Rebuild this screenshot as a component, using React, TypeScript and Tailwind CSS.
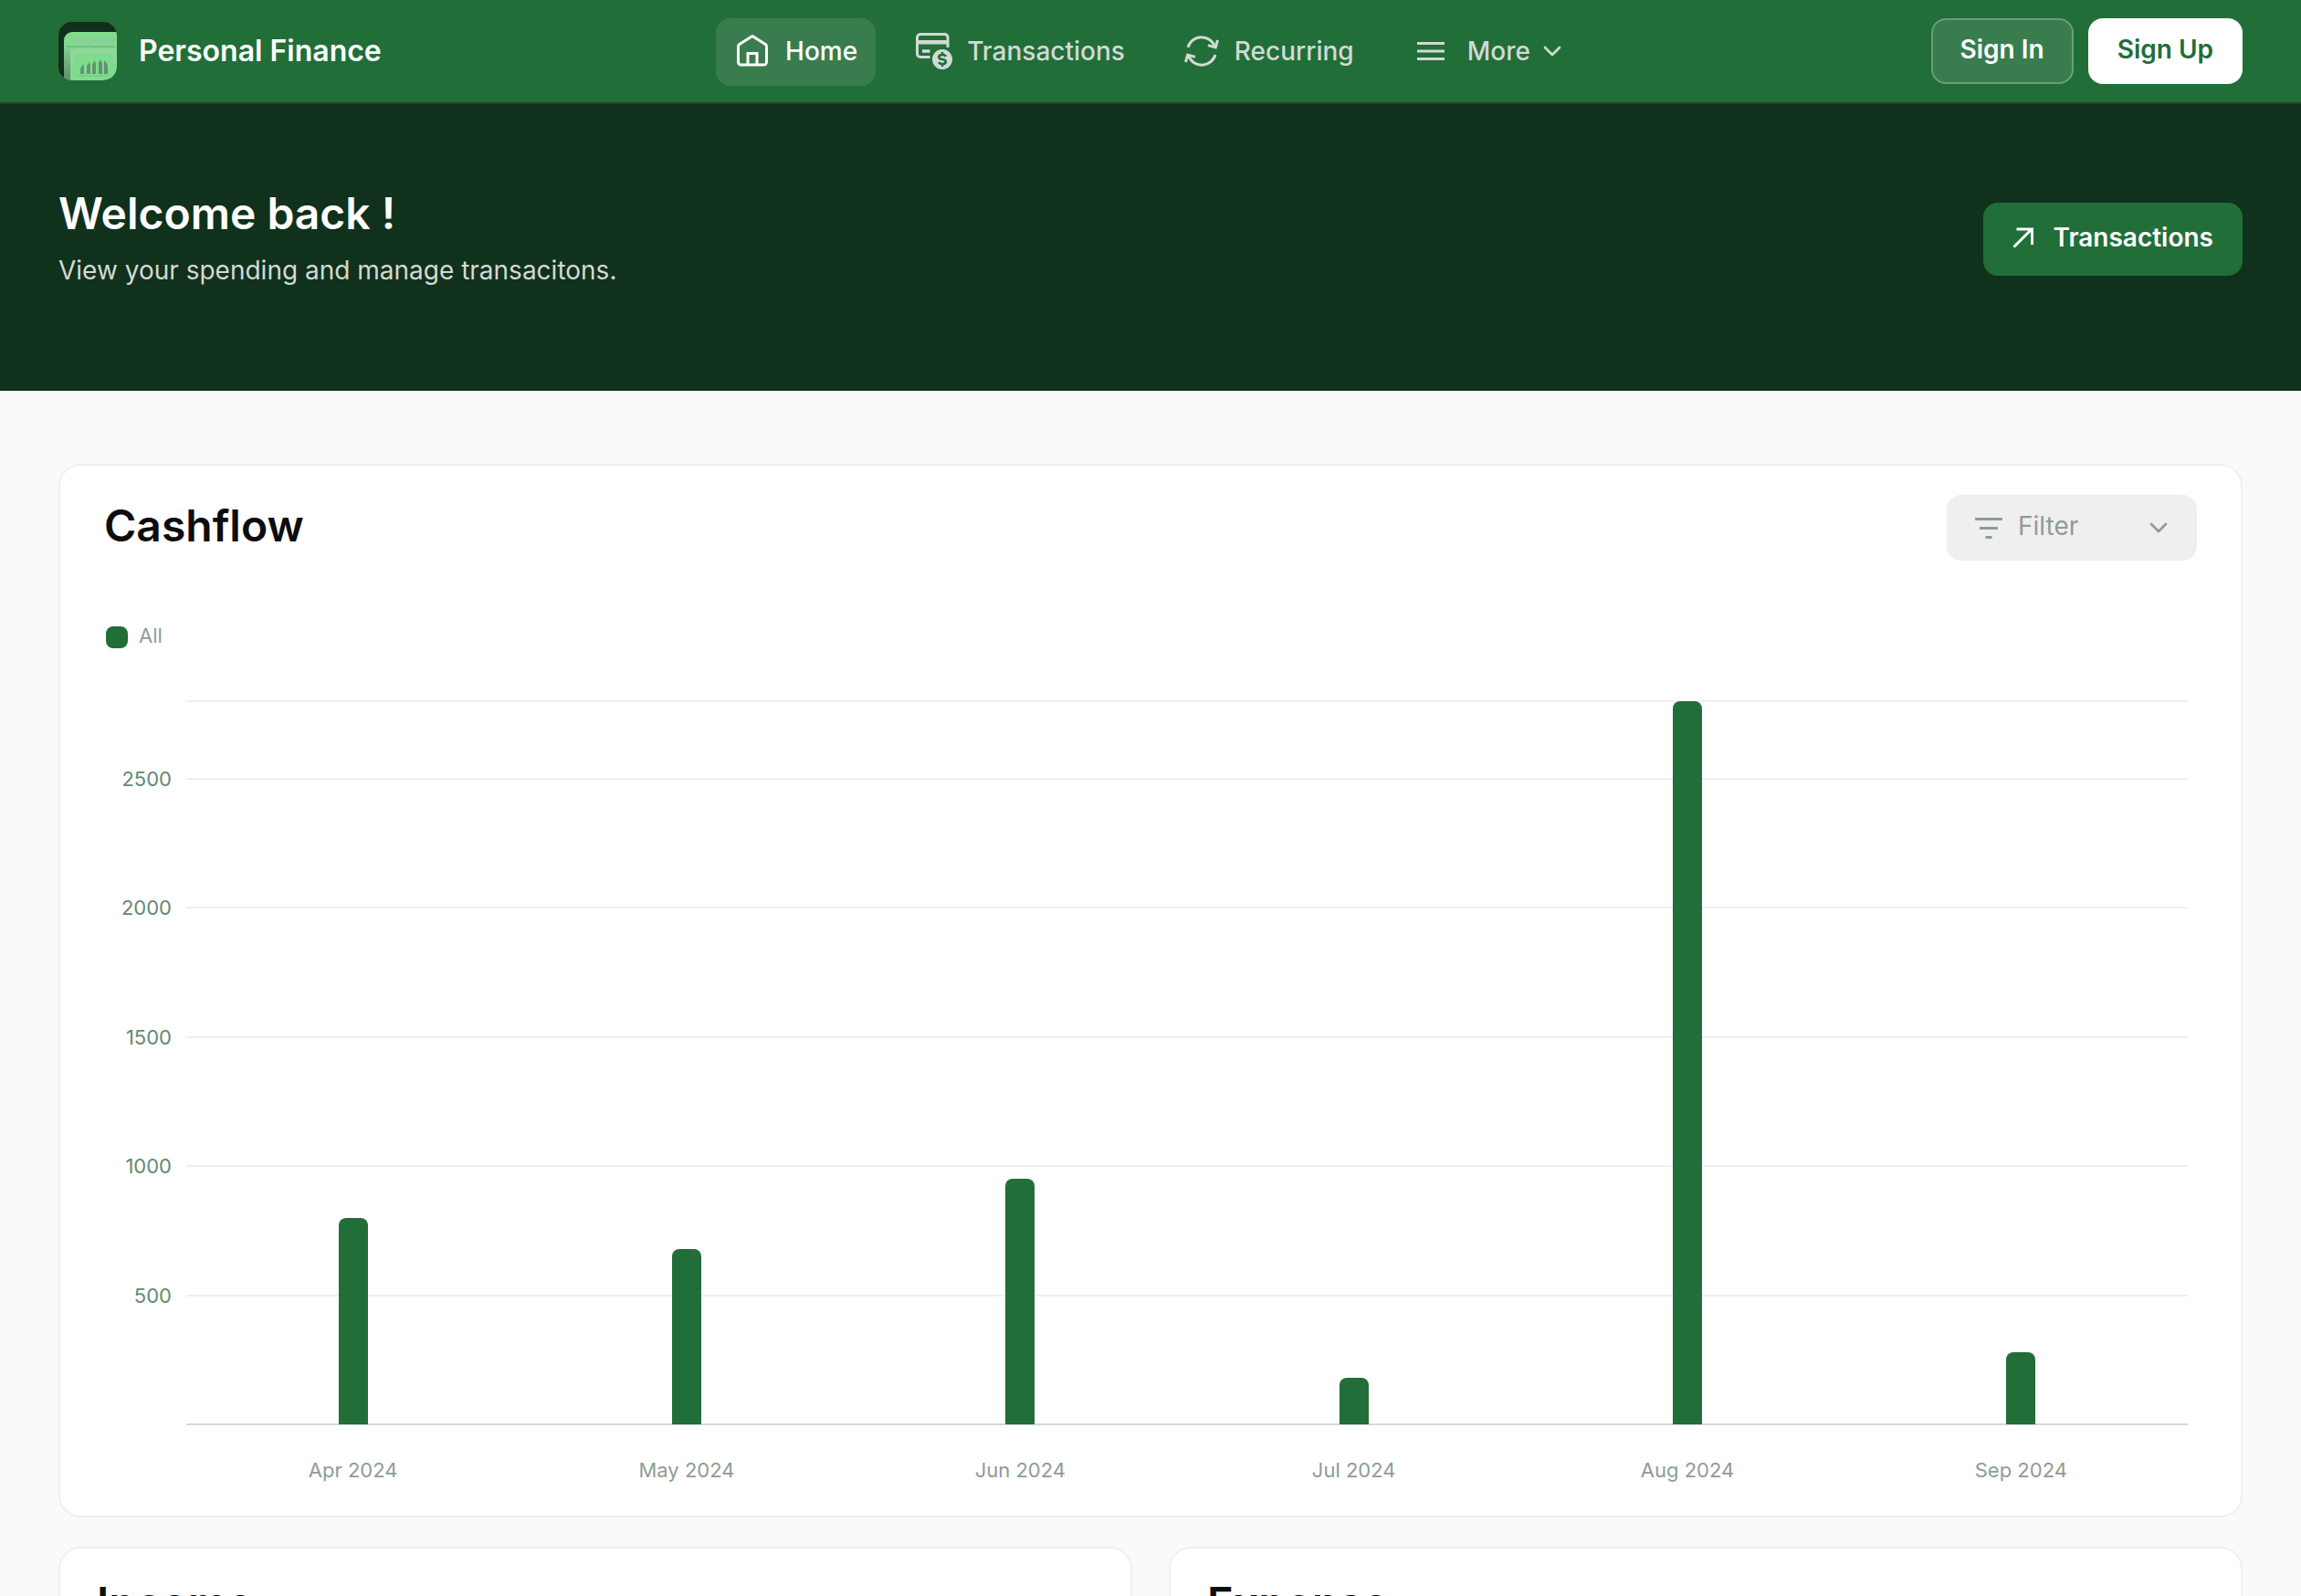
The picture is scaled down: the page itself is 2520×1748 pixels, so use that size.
import type { ReactNode } from 'react'
import { ChevronDown } from 'lucide-react'

const cashflow = [
    { month: 'Apr 2024', value: 800 },
    { month: 'May 2024', value: 680 },
    { month: 'Jun 2024', value: 950 },
    { month: 'Jul 2024', value: 180 },
    { month: 'Aug 2024', value: 2800 },
    { month: 'Sep 2024', value: 280 },
]

const MAX = 2800
const ticks = [500, 1000, 1500, 2000, 2500, MAX]

const Logo = () => (
    <svg viewBox="0 0 64 64" className="size-16" aria-hidden="true">
        <defs>
            <clipPath id="logo-clip">
                <rect width="64" height="64" rx="15" />
            </clipPath>
            <linearGradient id="logo-side" x1="0" y1="0" x2="0" y2="1">
                <stop offset="0" stopColor="#7fdc8d" />
                <stop offset="0.9" stopColor="#679372" />
            </linearGradient>
        </defs>
        <g clipPath="url(#logo-clip)">
            <rect width="64" height="64" fill="#10301b" />
            <path d="M6 64V20a9 9 0 0 1 9-9h49v53z" fill="#7fdc8d" />
            <path d="M6 64V22h7v42z" fill="url(#logo-side)" />
            <path d="M14 20h16l4 4 4-4h24" fill="none" stroke="#8fcb99" strokeWidth="4" />
            <path d="M9 27h53" stroke="#74bd82" strokeWidth="2" />
            <path d="M15 45V38q0-6 6-6h36q5 0 5 6v6" fill="none" stroke="#98d3a1" strokeWidth="4" />
            <path d="M24 57v-6l3-5 1 4v7zM31 57V48l3-4 1 4v9zM37 57V47l3-5 1 4v11zM44 57V45l2-4 2 4v12zM50 57V42l3 3 1 4v8z" fill="#639370" />
            <path d="M22 59h34" stroke="#74c482" />
        </g>
    </svg>
)

const HomeIcon = () => (
    <svg viewBox="0 0 40 40" className="size-10" fill="none" stroke="currentColor" strokeWidth="3" aria-hidden="true">
        <path d="M20 3.5 5.8 12.6Q4.5 13.5 4.5 15V32a3 3 0 0 0 3 3h25a3 3 0 0 0 3-3V15q0-1.5-1.3-2.4z" strokeLinejoin="round" />
        <path d="M15 35V22.5h10V35" />
    </svg>
)

const TransactionsIcon = () => (
    <svg viewBox="0 0 40 40" className="size-10" fill="none" stroke="currentColor" strokeWidth="3" aria-hidden="true">
        <path d="M35 16V5a3.5 3.5 0 0 0-3.5-3.5H5A3.5 3.5 0 0 0 1.5 5v18A3.5 3.5 0 0 0 5 26.5h10.5" />
        <path d="M1.5 10.2h34" strokeWidth="4.5" />
        <path d="M7 20h8.5" strokeWidth="3.5" />
        <circle cx="29" cy="29" r="11" fill="currentColor" stroke="none" />
        <path d="M33 25.8q-1.2-1.8-4-1.8c-5 0-5 4.6 0 5 5 .4 5 5 0 5q-2.8 0-4-1.8M29 21v3M29 34v3" stroke="#216e39" strokeWidth="2.6" />
    </svg>
)

const RecurringIcon = () => (
    <svg viewBox="0 0 40 40" className="size-10" fill="none" stroke="currentColor" strokeWidth="3" aria-hidden="true">
        <path d="M5 15.8A15.5 15.5 0 0 1 34.5 15.2M37.5 8l-2.2 8-8.3-2.4" />
        <path d="M35 24A15.5 15.5 0 0 1 5.5 24.8M2.5 32l2.2-8 8.3 2.4" />
    </svg>
)

const MenuIcon = () => (
    <svg viewBox="0 0 40 40" className="size-10" stroke="currentColor" strokeWidth="3" aria-hidden="true">
        <path d="M5 11.5h30M5 20h30M5 28.5h30" />
    </svg>
)

const ArrowIcon = () => (
    <svg viewBox="0 0 32 32" className="size-8" fill="none" stroke="currentColor" strokeWidth="3" aria-hidden="true">
        <path d="M1.5 26.5 21 7M4.5 7h17v17" />
    </svg>
)

const FilterIcon = () => (
    <svg viewBox="0 0 40 40" className="size-10" stroke="currentColor" strokeWidth="3" aria-hidden="true">
        <path d="M5 10.5h30M10 20.5h20M16.5 30.5h7" />
    </svg>
)

const NavLink = ({ icon, label, active = false }: { icon: ReactNode; label: string; active?: boolean }) => (
    <a
        href="#"
        className={`flex h-[74px] items-center gap-4 rounded-2xl px-5 pb-0.5 ${
            active ? 'bg-white/11 text-white' : 'text-[#d3d9d5] hover:text-white'
        }`}
    >
        {icon}
        {label}
    </a>
)

const Header = () => (
    <header className="grid grid-cols-[1fr_auto_1fr] items-start border-b-2 border-[#1a4528] bg-[#216e39] px-16">
        <a href="#" className="flex h-28 items-center gap-6 text-[32px] font-semibold text-white">
            <Logo />
            Personal Finance
        </a>
        <nav className="flex gap-6 pt-5 text-[28px] font-medium">
            <NavLink icon={<HomeIcon />} label="Home" active />
            <NavLink icon={<TransactionsIcon />} label="Transactions" />
            <NavLink icon={<RecurringIcon />} label="Recurring" />
            <button type="button" className="flex h-[74px] items-center gap-5 px-5 pb-0.5 text-[#d3d9d5]">
                <MenuIcon />
                <span className="flex items-center gap-2">
                    More
                    <ChevronDown className="size-8" />
                </span>
            </button>
        </nav>
        <div className="flex justify-end gap-4 pt-5 text-[28px] font-semibold">
            <button type="button" className="h-18 rounded-2xl border-2 border-white/25 bg-white/11 px-[30px] pb-1 text-white">
                Sign In
            </button>
            <button type="button" className="h-18 rounded-2xl bg-white px-8 pb-1 text-[#216e39]">
                Sign Up
            </button>
        </div>
    </header>
)

const Hero = () => (
    <section className="flex items-center justify-between bg-[#10311b] px-16 pt-[90px] pb-[108px]">
        <div>
            <h1 className="text-[48px] leading-[60px] font-semibold text-white">Welcome back !</h1>
            <p className="mt-2 text-[28px] leading-[48px] text-[#d3d9d5]">View your spending and manage transacitons.</p>
        </div>
        <a href="#" className="flex h-20 items-center gap-3 rounded-2xl bg-[#216e39] px-8 pb-1 text-[28px] font-semibold text-white">
            <ArrowIcon />
            Transactions
        </a>
    </section>
)

const CashflowChart = () => (
    <div>
        <div className="mt-[72px] flex h-6 items-center gap-3 pl-0.5">
            <span className="size-6 rounded-lg bg-[#216e39]" />
            <span className="pb-1 text-[22px] text-[#8e9d93]">All</span>
        </div>

        <div className="mt-[58px] mr-2.5 ml-[90px]">
            <div className="relative h-[792px]">
                {ticks.map((tick) => (
                    <div
                        key={tick}
                        className="absolute inset-x-0 h-0.5 translate-y-1/2 bg-[#efefef]"
                        style={{ bottom: `${(tick / MAX) * 100}%` }}
                    >
                        {tick < MAX && (
                            <span className="absolute top-1/2 right-full -translate-y-1/2 pr-4 text-[22px] text-[#648a6f]">{tick}</span>
                        )}
                    </div>
                ))}
                <div className="absolute inset-x-0 bottom-0 h-0.5 translate-y-1/2 bg-[#d3d9d5]" />
                <div className="relative grid h-full grid-cols-6 items-end justify-items-center">
                    {cashflow.map((item) => (
                        <div
                            key={item.month}
                            className="w-8 rounded-t-lg bg-[#216e39]"
                            style={{ height: `${(item.value / MAX) * 100}%` }}
                        />
                    ))}
                </div>
            </div>
            <div className="mt-8 grid h-9 grid-cols-6 items-center text-center text-[22px] text-[#8e9d93]">
                {cashflow.map((item) => (
                    <span key={item.month}>{item.month}</span>
                ))}
            </div>
        </div>
    </div>
)

const App = () => {
    return (
        <div className="h-screen overflow-hidden bg-[#fafafa] font-['Inter',sans-serif] text-[#0d0d0d]">
            <Header />
            <Hero />
            <main className="px-16 pt-20">
                <section className="rounded-3xl border-2 border-[#f0f0f0] bg-white px-12 py-8">
                    <div className="flex items-center justify-between">
                        <h2 className="pb-1 text-[48px] leading-[60px] font-semibold">Cashflow</h2>
                        <div className="relative text-[#8e9d93]">
                            <select
                                aria-label="Filter"
                                className="block h-18 w-[274px] appearance-none rounded-2xl bg-[#efefef] pr-16 pb-1 pl-[78px] text-[28px]"
                            >
                                <option>Filter</option>
                            </select>
                            <span className="pointer-events-none absolute inset-y-0 left-[26px] flex items-center">
                                <FilterIcon />
                            </span>
                            <span className="pointer-events-none absolute inset-y-0 right-[26px] flex items-center">
                                <ChevronDown className="size-8" />
                            </span>
                        </div>
                    </div>
                    <CashflowChart />
                </section>

                <div className="mt-8 grid grid-cols-2 gap-10">
                    <section className="rounded-3xl border-2 border-[#f0f0f0] bg-white px-10 py-[30px]">
                        <h2 className="text-[48px] leading-[60px] font-semibold">Income</h2>
                    </section>
                    <section className="rounded-3xl border-2 border-[#f0f0f0] bg-white px-10 py-[30px]">
                        <h2 className="text-[48px] leading-[60px] font-semibold">Expense</h2>
                    </section>
                </div>
            </main>
        </div>
    )
}

export default App
